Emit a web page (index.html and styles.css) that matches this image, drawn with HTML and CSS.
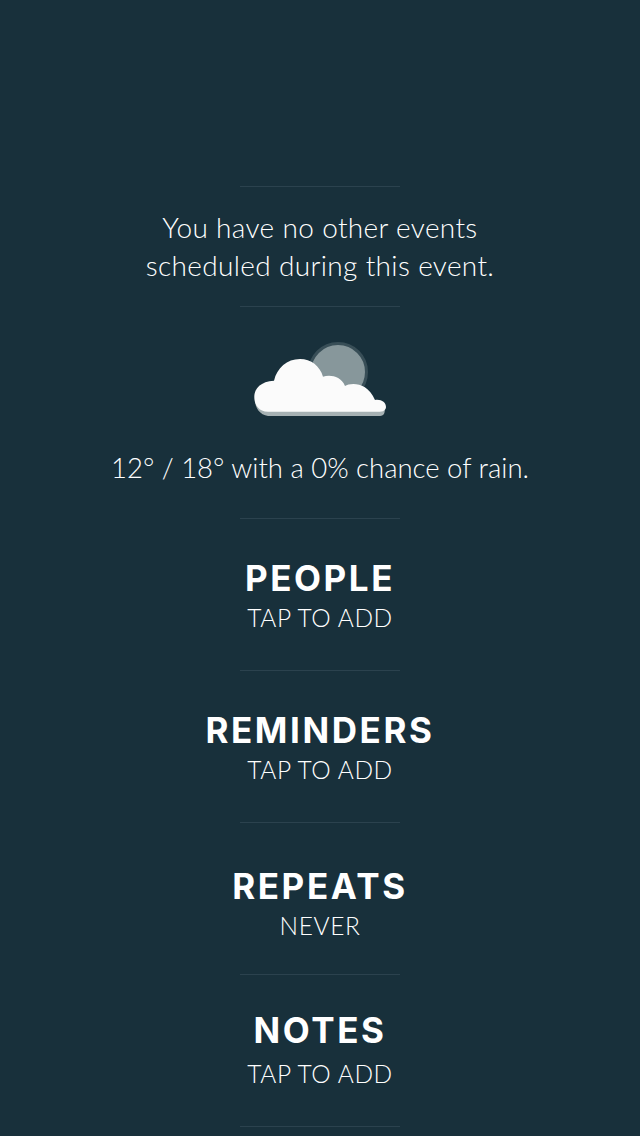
FILE: index.html
```html
<!DOCTYPE html>
<html>
<head>
	<meta charset="UTF-8">
	<title>Event details</title>
	<link rel="stylesheet" href="styles.css">
</head>
<body>
	<div class="page">
		<section class="block conflicts">
			<p class="copy">You have no other events<br>scheduled during this event.</p>
		</section>
		<section class="block weather">
			<svg class="weather-icon" viewBox="0 0 160 100" width="160" height="100">
				<circle cx="98" cy="42" r="28.500" fill="#87979b" stroke="#384e57" stroke-width="3"/>
				<path fill="#a6b1b3" d="M28 86 C20 85 15 78 15 70 H138 L144 76 C146 82 144 86 140 86 Z"/>
				<path fill="#fbfbfb" d="M28 81.700 C19 81.700 14.300 75 14.300 67 C14.300 58 21 51.500 34 50.700 C37 38 47 29 60 29 C71 29 80 36 83 46.700 C90 44.500 101 46 105 56 C110 53 127 51 135 70 C141 69 146 72 146 77 C146 80 143 81.700 140 81.700 Z"/>
			</svg>
			<p class="copy copy-weather">12° / 18° with a 0% chance of rain.</p>
		</section>
		<section class="block item">
			<h2 class="item-title">PEOPLE</h2>
			<div class="item-value">TAP TO ADD</div>
		</section>
		<section class="block item">
			<h2 class="item-title">REMINDERS</h2>
			<div class="item-value">TAP TO ADD</div>
		</section>
		<section class="block item item-repeats">
			<h2 class="item-title">REPEATS</h2>
			<div class="item-value">NEVER</div>
		</section>
		<section class="block item item-notes">
			<h2 class="item-title">NOTES</h2>
			<div class="item-value">TAP TO ADD</div>
		</section>
		<div class="rule"></div>
	</div>
</body>
</html>
```

FILE: styles.css
```css
html, body {
	margin: 0;
	height: 100%;
	background: #18303b;
}

.page {
	height: 1136px;
	overflow: hidden;
	padding-top: 186px;
	box-sizing: border-box;
	font-family: "Lato", "Liberation Sans", sans-serif;
	color: #fff;
	text-align: center;
}

.block {
	display: flex;
	flex-direction: column;
	align-items: center;
	box-sizing: border-box;
	background: linear-gradient(#2b424e, #2b424e) top center / 160px 1px no-repeat;
}

.rule {
	width: 160px;
	height: 1px;
	margin: 0 auto;
	background: #2b424e;
}

.conflicts {
	height: 120px;
	padding-top: 22px;
}

.weather {
	height: 212px;
	padding-top: 24px;
}

.item {
	height: 152px;
	padding-top: 40px;
}

.item-repeats {
	padding-top: 44px;
}

.item-notes {
	padding-top: 36px;
}

.copy {
	margin: 0;
	font-size: 28px;
	font-weight: 300;
	line-height: 38px;
	letter-spacing: 0.350px;
}

.copy-weather {
	font-size: 27.500px;
	letter-spacing: 0;
}

.weather-icon {
	display: block;
	margin-bottom: 19px;
}

.item-title {
	margin: 0;
	font-family: "Inter", "Lato", sans-serif;
	font-size: 35px;
	font-weight: 700;
	line-height: 40px;
	letter-spacing: 2.600px;
}

.item-value {
	margin-top: 5px;
	font-size: 24.500px;
	font-weight: 300;
	line-height: 30px;
	letter-spacing: 0.6px;
}

.item-notes .item-value {
	margin-top: 9px;
}
```
